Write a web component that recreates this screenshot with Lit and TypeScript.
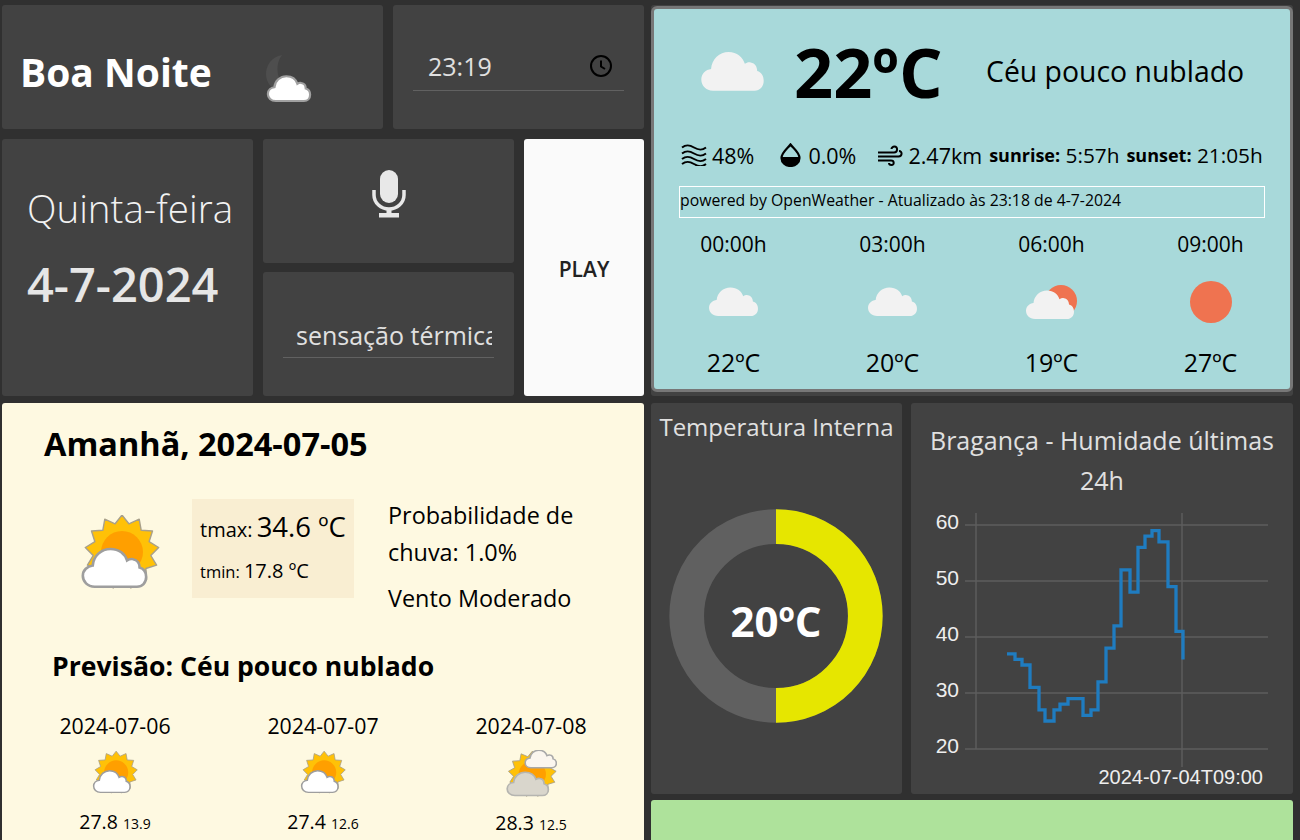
import { LitElement, html, css, svg } from 'lit'
import { customElement } from 'lit/decorators.js'

const CLOUD =
    'M20 62C9 62 2 54 2 45C2 36 9 30 17 29C18 14 30 3 44 3C57 3 66 11 69 21C72 19 75 18 78 19C85 20 88 26 88 32C95 34 98 40 98 47C98 56 92 62 84 62Z'

// flat cloud, 100x64 box
const flatCloud = (w: number, h: number) => html`<svg
    width=${w}
    height=${h}
    viewBox="0 0 100 64"
    preserveAspectRatio="none"
>
    <path d=${CLOUD} fill="#f2f2f2" />
</svg>`

const burst = (cx: number, cy: number, spikes: number, r1: number, r2: number) => {
    const pts: string[] = []
    for (let i = 0; i < spikes * 2; i++) {
        const r = i % 2 ? r2 : r1
        const a = (Math.PI * i) / spikes - Math.PI / 2
        pts.push(
            `${(cx + r * Math.cos(a)).toFixed(1)},${(cy + r * Math.sin(a)).toFixed(1)}`
        )
    }
    return pts.join(' ')
}

const sun = svg`
    <polygon points=${burst(42, 37, 13, 37, 29)} fill="#ffc107" stroke="#a8a08a" stroke-width="1.4" stroke-linejoin="round" />
    <circle cx="42" cy="37" r="21" fill="#ff9f00" />`

const sunCloud = (w: number, h: number) => html`<svg
    width=${w}
    height=${h}
    viewBox="0 0 80 76"
>
    ${sun}
    <g transform="translate(1.5 32) scale(.66 .64)">
        <path d=${CLOUD} fill="#fff" stroke="#9e9e9e" stroke-width="4" />
    </g>
</svg>`

const sunTwoClouds = (w: number, h: number) => html`<svg
    width=${w}
    height=${h}
    viewBox="0 0 80 76"
    preserveAspectRatio="none"
>
    <g transform="translate(0 2)">${sun}</g>
    <g transform="translate(30 -1) scale(.5 .48)">
        <path d=${CLOUD} fill="#fbf6ee" stroke="#a8a8a8" stroke-width="5" />
    </g>
    <g transform="translate(2 34) scale(.66 .64)">
        <path d=${CLOUD} fill="#d9d6cc" stroke="#b5b5b0" stroke-width="4" />
    </g>
</svg>`

const moonCloud = html`<svg width="48" height="50" viewBox="0 0 48 50">
    <path
        d="M17 2C6 4 1 13 1 21C1 28 5 34 10 36L17 30C12 24 10 11 17 2Z"
        fill="#4e4e4e"
    />
    <g transform="translate(2 22) scale(.44 .42)">
        <path d=${CLOUD} fill="#fff" stroke="#a0a0a0" stroke-width="5" />
    </g>
</svg>`

const clockIcon = html`<svg width="24" height="24" viewBox="0 0 24 24">
    <circle cx="12" cy="12" r="10" fill="none" stroke="#000" stroke-width="2" />
    <path d="M12 6.5V12.5L16 15" fill="none" stroke="#000" stroke-width="2" />
</svg>`

const micIcon = html`<svg width="34" height="48" viewBox="0 0 34 48">
    <rect x="8" y="0" width="18" height="33" rx="9" fill="#e8e8e8" />
    <path
        d="M2 20V25C2 33 9 39 17 39C25 39 32 33 32 25V20"
        fill="none"
        stroke="#e8e8e8"
        stroke-width="3.5"
    />
    <path d="M14.5 38H19.5V43H27V47.5H7V43H14.5Z" fill="#e8e8e8" />
</svg>`

const wavesIcon = html`<svg width="26" height="22" viewBox="0 0 26 22">
    <path
        d="M1 3.5C5 .5 8 .5 13 3.5C18 6.5 21 6.5 25 3.5M1 9.5C5 6.5 8 6.5 13 9.5C18 12.5 21 12.5 25 9.5M1 15C5 12 8 12 13 15C18 18 21 18 25 15M1 20C5 17 8 17 13 20C18 23 21 23 25 20"
        fill="none"
        stroke="#000"
        stroke-width="2"
    />
</svg>`

const dropIcon = html`<svg width="21" height="24" viewBox="0 0 21 24">
    <path
        d="M10.5 1.5C8 5 1.5 9.5 1.5 15C1.5 19.5 5.5 23 10.5 23C15.5 23 19.5 19.5 19.5 15C19.5 9.5 13 5 10.5 1.5Z"
        fill="none"
        stroke="#000"
        stroke-width="2.2"
    />
    <path
        d="M2 14H19C19.5 19 15.5 23 10.5 23C5.5 23 1.500 19 2 14Z"
        fill="#000"
    />
</svg>`

const windIcon = html`<svg width="26" height="21" viewBox="0 0 26 21">
    <path
        d="M1 7.500H17C21 7.500 21 1.500 17.500 1.500C15.500 1.500 14.500 3 14.500 4M1 11.500H21.500C25.500 11.500 25.500 6 22 6M1 15.500H14C17.500 15.500 17.500 20 14.500 20C13 20 12 19 12 18"
        fill="none"
        stroke="#000"
        stroke-width="2"
    />
</svg>`

const hourly = [
    { time: '00:00h', temp: '22ºC', icon: 'cloud' },
    { time: '03:00h', temp: '20ºC', icon: 'cloud' },
    { time: '06:00h', temp: '19ºC', icon: 'partly' },
    { time: '09:00h', temp: '27ºC', icon: 'sun' },
]

const daily = [
    { date: '2024-07-06', max: '27.8', min: '13.9', two: false },
    { date: '2024-07-07', max: '27.4', min: '12.6', two: false },
    { date: '2024-07-08', max: '28.3', min: '12.5', two: true },
]

const humidity = [
    37, 36, 35, 31, 27, 25, 27, 28, 29, 26, 27, 32, 38, 42, 52, 48, 56, 58, 59,
    57, 49, 41, 36,
]
// x of each step, relative to the chart tile
const stepX = [
    96, 104, 111, 119, 128, 134, 143, 149, 157, 172, 180, 187, 195, 203, 210,
    219, 227, 234, 241, 248, 257, 265, 272,
]

@customElement('app-root')
export class AppRoot extends LitElement {
    static styles = css`
        :host {
            display: block;
            width: 1300px;
            height: 840px;
            overflow: hidden;
            background: #303030;
            font-family: 'Open Sans', 'Noto Sans', sans-serif;
            color: #000;
        }

        .page {
            display: grid;
            grid-template-columns: 642px 642px;
            column-gap: 7px;
            padding: 5px 0 0 2px;
        }

        .col {
            display: flex;
            flex-direction: column;
        }

        .tile {
            background: #424242;
            border-radius: 3px;
            box-sizing: border-box;
        }

        .top {
            display: flex;
            gap: 10px;
            height: 124px;
            margin-bottom: 10px;
        }

        .greet {
            width: 381px;
            display: flex;
            align-items: center;
            padding: 8px 0 0 18px;
            color: #fff;
            font-size: 39px;
            font-weight: 700;
        }

        .greet svg {
            margin: 14px 0 0 53px;
        }

        .clock {
            width: 251px;
            padding: 0 20px;
        }

        .field {
            display: flex;
            align-items: center;
            justify-content: space-between;
            height: 86px;
            box-sizing: border-box;
            padding: 37px 11px 0 15px;
            border-bottom: 1px solid #616161;
            color: #e0e0e0;
            font-size: 25px;
        }

        .mid {
            display: grid;
            grid-template-columns: 251px 251px 120px;
            grid-template-rows: 124px 124px;
            column-gap: 10px;
            row-gap: 9px;
            margin-bottom: 7px;
        }

        .date {
            grid-row: span 2;
            padding: 40px 0 0 25px;
            color: #f2f2f2;
        }

        .weekday {
            font-size: 38.500px;
            font-weight: 300;
            line-height: 58px;
        }

        .day {
            margin-top: 18px;
            font-size: 47px;
            font-weight: 600;
            line-height: 58px;
            color: #e6e6e6;
        }

        .mic {
            display: flex;
            justify-content: center;
            padding-top: 31px;
        }

        .play {
            grid-row: 1 / span 2;
            grid-column: 3;
            display: flex;
            align-items: center;
            justify-content: center;
            background: #fafafa;
            border-radius: 3px;
            padding-top: 2px;
            box-sizing: border-box;
            font-size: 21px;
            font-weight: 600;
            color: #222;
        }

        .sense {
            padding: 0 20px;
        }

        .sense .field {
            padding: 41px 2px 0 13px;
        }

        .sense input {
            width: 100%;
            height: 33px;
            padding: 0;
            border: none;
            outline: none;
            background: transparent;
            color: #e0e0e0;
            font: inherit;
        }

        .cream {
            background: #fef9e1;
            border-radius: 3px;
            height: 500px;
            box-sizing: border-box;
            padding: 19px 0 0 0;
        }

        .cream h2 {
            margin: 0 0 0 42px;
            font-size: 32.500px;
            line-height: 44px;
            font-weight: 700;
        }

        .tomorrow {
            display: flex;
            margin-top: 33px;
            height: 119px;
        }

        .big-sun {
            width: 80px;
            margin: 16px 32px 0 78px;
        }

        .minmax {
            width: 162px;
            height: 99px;
            box-sizing: border-box;
            background: #f9eed2;
            padding: 8px 0 0 8px;
            line-height: 40px;
            white-space: nowrap;
        }

        .minmax .l1 {
            font-size: 20px;
        }

        .minmax .v1 {
            font-size: 27.500px;
        }

        .minmax .l2 {
            font-size: 16.500px;
        }

        .minmax .v2 {
            font-size: 20px;
        }

        .rain {
            margin-left: 34px;
            width: 230px;
            font-size: 23.400px;
            line-height: 37px;
            margin-top: -2px;
        }

        .rain p {
            margin: 0 0 9px;
        }

        .cream h3 {
            margin: 28px 0 0 50px;
            font-size: 26.600px;
            line-height: 40px;
            font-weight: 700;
        }

        .days {
            display: grid;
            grid-template-columns: repeat(3, 208px);
            margin: 27px 0 0 9px;
            text-align: center;
        }

        .days .d {
            font-size: 21.300px;
            line-height: 26px;
        }

        .days svg {
            display: block;
            margin: 11px auto 12px;
        }

        .days .t {
            font-size: 19.500px;
            line-height: 28px;
        }

        .days small {
            font-size: 14px;
        }

        .weather {
            height: 391px;
            margin-bottom: 7px;
        }

        .card {
            height: 386px;
            box-sizing: border-box;
            background: #a8d9da;
            border: 3px solid #777;
            border-radius: 6px;
            margin-top: 1px;
        }

        .now {
            display: flex;
            align-items: center;
            height: 124px;
            padding-left: 46px;
            box-sizing: border-box;
        }

        .now .deg {
            margin-left: 29px;
            width: 192px;
            font-size: 68.500px;
            font-weight: 700;
        }

        .now .sky {
            font-size: 28.400px;
        }

        .stats {
            display: flex;
            align-items: center;
            height: 30px;
            margin-top: 7px;
            padding-left: 27px;
            font-size: 21.500px;
            white-space: nowrap;
        }

        .stats b {
            font-size: 18px;
            font-weight: 700;
        }

        .stats span {
            display: flex;
            align-items: center;
        }

        .stats svg {
            margin-right: 5px;
        }

        .stats .humid {
            margin-right: 26px;
        }

        .stats .drop {
            margin-right: 21px;
        }

        .stats .drop svg {
            margin-right: 7px;
        }

        .stats .sunr {
            margin-left: 7px;
            font-size: 20.800px;
        }

        .powered {
            margin: 16px 25px 0 25px;
            height: 32px;
            box-sizing: border-box;
            border: 1px solid #fff;
            font-size: 15.800px;
            line-height: 26px;
            white-space: nowrap;
        }

        .hours {
            display: grid;
            grid-template-columns: repeat(4, 159px);
            margin-top: 12px;
            text-align: center;
            font-size: 21px;
        }

        .hours .ic {
            height: 87px;
            display: flex;
            align-items: center;
            justify-content: center;
        }

        .hours .temp {
            font-size: 25px;
        }

        .sunball {
            width: 42px;
            height: 42px;
            border-radius: 50%;
            background: #ef7350;
        }

        .partly {
            position: relative;
            width: 54px;
            height: 36px;
        }

        .partly i {
            position: absolute;
            right: 2px;
            top: 1px;
            width: 32px;
            height: 32px;
            border-radius: 50%;
            background: #ef7350;
        }

        .partly svg {
            position: absolute;
            left: 0;
            bottom: 0;
        }

        .bottom {
            display: flex;
            gap: 9px;
            height: 391px;
            margin-bottom: 6px;
        }

        .gauge {
            width: 251px;
            text-align: center;
            color: #e0e0e0;
            font-size: 24px;
            line-height: 48px;
        }

        .gauge svg {
            display: block;
            margin-top: 55px;
        }

        .chart {
            width: 382px;
            text-align: center;
            color: #e0e0e0;
            font-size: 25px;
            line-height: 40px;
            padding-top: 17px;
        }

        .chart p {
            margin: 0 10px;
        }

        .chart svg {
            display: block;
        }

        .green {
            height: 60px;
            background: #aee29b;
            border-radius: 3px;
        }
    `

    private renderHourIcon(icon: string) {
        if (icon === 'sun') return html`<div class="sunball"></div>`
        if (icon === 'partly')
            return html`<div class="partly">
                <i></i>${flatCloud(50, 31)}
            </div>`
        return flatCloud(51, 31)
    }

    private renderChart() {
        const y = (v: number) => 249 - (v - 20) * 5.6
        let d = ''
        humidity.forEach((v, i) => {
            const x0 = stepX[i]
            const x1 = stepX[i + 1] ?? stepX[i]
            d += `${i === 0 ? 'M' : 'L'}${x0} ${y(v).toFixed(1)}L${x1} ${y(v).toFixed(1)}`
        })
        const ticks = [60, 50, 40, 30, 20]
        return html`<svg width="382" height="294" viewBox="0 0 382 294">
            <g stroke="#5e5e5e" stroke-width="1.4">
                ${ticks.map(
                    (t) =>
                        svg`<line x1="54" x2="357" y1=${y(t)} y2=${y(t)} />`
                )}
                <line x1="65" x2="65" y1="13" y2="249" />
                <line x1="271" x2="271" y1="13" y2="267" />
            </g>
            <path d=${d} fill="none" stroke="#1f7cc0" stroke-width="3.300" />
            <g
                fill="#eee"
                font-family="'Liberation Sans', Arial, sans-serif"
                font-size="21"
            >
                ${ticks.map(
                    (t) =>
                        svg`<text x="48" y=${y(t) + 4} text-anchor="end">${t}</text>`
                )}
                <text x="352" y="284" text-anchor="end" font-size="20">
                    2024-07-04T09:00
                </text>
            </g>
        </svg>`
    }

    render() {
        return html`
            <div class="page">
                <div class="col">
                    <div class="top">
                        <div class="tile greet">Boa Noite ${moonCloud}</div>
                        <div class="tile clock">
                            <div class="field">23:19 ${clockIcon}</div>
                        </div>
                    </div>
                    <div class="mid">
                        <div class="tile date">
                            <div class="weekday">Quinta-feira</div>
                            <div class="day">4-7-2024</div>
                        </div>
                        <div class="tile mic">${micIcon}</div>
                        <div class="play">PLAY</div>
                        <div class="tile sense">
                            <div class="field">
                                <input type="text" .value=${'sensação térmica'} />
                            </div>
                        </div>
                    </div>
                    <div class="cream">
                        <h2>Amanhã, 2024-07-05</h2>
                        <div class="tomorrow">
                            <div class="big-sun">${sunCloud(80, 76)}</div>
                            <div class="minmax">
                                <div>
                                    <span class="l1">tmax:</span>
                                    <span class="v1">34.6 ºC</span>
                                </div>
                                <div>
                                    <span class="l2">tmin:</span>
                                    <span class="v2">17.8 ºC</span>
                                </div>
                            </div>
                            <div class="rain">
                                <p>Probabilidade de chuva: 1.0%</p>
                                <p>Vento Moderado</p>
                            </div>
                        </div>
                        <h3>Previsão: Céu pouco nublado</h3>
                        <div class="days">
                            ${daily.map(
                                (d) => html`<div>
                                    <div class="d">${d.date}</div>
                                    ${d.two
                                        ? sunTwoClouds(52, 47)
                                        : sunCloud(46, 46)}
                                    <div class="t">
                                        ${d.max} <small>${d.min}</small>
                                    </div>
                                </div>`
                            )}
                        </div>
                    </div>
                </div>
                <div class="col">
                    <div class="tile weather">
                        <div class="card">
                            <div class="now">
                                ${flatCloud(65, 42)}
                                <div class="deg">22ºC</div>
                                <div class="sky">Céu pouco nublado</div>
                            </div>
                            <div class="stats">
                                <span class="humid">${wavesIcon}48%</span>
                                <span class="drop">${dropIcon}0.0%</span>
                                <span>${windIcon}2.47km</span>
                                <span class="sunr">
                                    <b>sunrise:</b>&nbsp;5:57h
                                </span>
                                <span class="sunr">
                                    <b>sunset:</b>&nbsp;21:05h
                                </span>
                            </div>
                            <div class="powered">
                                powered by OpenWeather - Atualizado às 23:18 de
                                4-7-2024
                            </div>
                            <div class="hours">
                                ${hourly.map(
                                    (h) => html`<div>
                                        <div>${h.time}</div>
                                        <div class="ic">
                                            ${this.renderHourIcon(h.icon)}
                                        </div>
                                        <div class="temp">${h.temp}</div>
                                    </div>`
                                )}
                            </div>
                        </div>
                    </div>
                    <div class="bottom">
                        <div class="tile gauge">
                            Temperatura Interna
                            <svg width="251" height="220" viewBox="0 0 251 220">
                                <circle
                                    cx="125"
                                    cy="110"
                                    r="89.300"
                                    fill="none"
                                    stroke="#606060"
                                    stroke-width="34.700"
                                />
                                <path
                                    d="M125 20.700A89.300 89.300 0 0 1 125 199.300"
                                    fill="none"
                                    stroke="#e6e600"
                                    stroke-width="34.700"
                                />
                                <text
                                    x="125"
                                    y="131"
                                    fill="#fff"
                                    font-size="42"
                                    font-weight="700"
                                    text-anchor="middle"
                                >
                                    20ºC
                                </text>
                            </svg>
                        </div>
                        <div class="tile chart">
                            <p>Bragança - Humidade últimas 24h</p>
                            ${this.renderChart()}
                        </div>
                    </div>
                    <div class="green"></div>
                </div>
            </div>
        `
    }
}
